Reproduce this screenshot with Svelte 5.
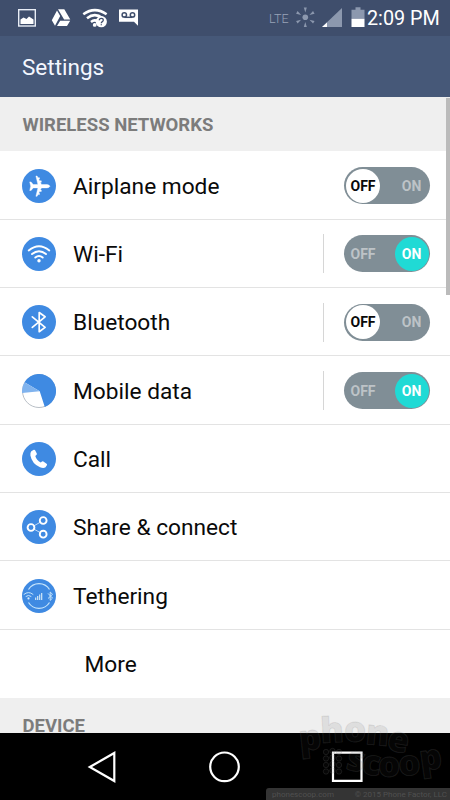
<script lang="ts">
  interface Row {
    icon: string;
    label: string;
    on?: boolean;
    split?: boolean; // thin rule between the label and its switch
  }

  let rows: Row[] = $state([
    { icon: "airplane", label: "Airplane mode", on: false },
    { icon: "wifi", label: "Wi-Fi", on: true, split: true },
    { icon: "bluetooth", label: "Bluetooth", on: false, split: true },
    { icon: "data", label: "Mobile data", on: true, split: true },
    { icon: "call", label: "Call" },
    { icon: "share", label: "Share & connect" },
    { icon: "tether", label: "Tethering" },
    { icon: "", label: "More" },
  ]);

  const RAYS = [0, 60, 120, 180, 240, 300];

  // Staggered dots in the watermark
  const DOTS: Array<[number, number]> = [];
  for (let r = 0; r < 4; r++) {
    for (let c = 0; c < 3; c++) DOTS.push([326 + c * 6.5, 752 + r * 6.5 - (c === 1 ? 1 : 0)]);
  }
</script>

<div class="phone">
  <header class="status">
    <svg class="notes" viewBox="0 0 150 36" aria-hidden="true">
      <rect x="18.7" y="9.7" width="16.6" height="16.3" fill="none" stroke="#e8edf6" stroke-width="1.4" />
      <path d="M20.500 24v-4.500l3-2 3 1.500 2.500-2.500 4.500 3v4.500z" fill="#fff" />
      <path d="M58 9.300h6.300l6 10.300h-6.200zM57 10.400l3.200 5.600-5.200 9.700-3.200-5.500zM60.200 20.700h10l-3.200 5.300h-10z" fill="#fff" />
      <g fill="none" stroke="#fff" stroke-width="2.500">
        <path d="M83.300 14.300q11.500-8.300 23.300 0" />
        <path d="M87 18.300q7.800-6.300 15.600 0" />
        <path d="M91 22q3.300-2.800 6.600-.8" />
      </g>
      <circle cx="94.700" cy="24.900" r="1.900" fill="#fff" />
      <circle cx="101.300" cy="21.700" r="5.600" fill="#fff" />
      <path d="M99.300 20.300q0-2 2-2t2 1.800q0 1.100-1.200 1.800-.8.500-.8 1.300m0 1.100v1" fill="none" stroke="#3f4e6c" stroke-width="1.300" />
      <path d="M119 9.500h19v16.200l-4-4h-15z" fill="#fff" />
      <g fill="none" stroke="#3f4e6c" stroke-width="1.500">
        <circle cx="124.300" cy="14.900" r="2.200" />
        <circle cx="132.500" cy="14.900" r="2.200" />
        <path d="M124.300 17.300h8.200" />
      </g>
    </svg>

    <span class="lte">LTE</span>
    <svg class="signals" viewBox="294 0 73 36" aria-hidden="true">
      <g fill="#8c98ae">
        <circle cx="305.300" cy="17.300" r="2.800" />
        {#each RAYS as a}
          <path d="M303.800 7.500h3l-1.500 5z" transform="rotate({a} 305.300 17.300)" />
        {/each}
        <path d="M342 8v19h-20z" />
        <path d="M355.500 7.300h5v2.500h4v9h-13v-9h4z" />
      </g>
      <path d="M322 27l5-4.600v4.600zM351.500 18.700h13v8.300h-13z" fill="#fff" />
    </svg>
    <span class="clock">2:09 PM</span>
  </header>

  <div class="title">Settings</div>

  <main>
    <h2>WIRELESS NETWORKS</h2>

    {#each rows as row}
      <div class="row" class:plain={!row.icon}>
        {#if row.icon}
          <svg class="icon" viewBox="0 0 34 34" aria-hidden="true">
            {#if row.icon !== "data"}<circle cx="17" cy="17" r="17" fill="#3f8ae2" />{/if}
            {#if row.icon === "airplane"}
              <path d="M28 17.200q-.8-1.600-3-1.700h-5.500l-1.200-2.200h1v-1.500h-1.800l-.8-1.700h.8v-1.400h-1.500l-.9-1.700h-1.200l2 8.500h-4.700l-2.100-2.600h-1.400l1 4.300-1 4.300h1.400l2.100-2.600h4.700l-2 8.400h1.200l.9-1.700h1.500v-1.400h-.8l.8-1.700h1.800v-1.500h-1l1.200-2.100h5.500q2.200-.1 3-1.700z" fill="#fff" stroke="#fff" stroke-width=".4" />
            {:else if row.icon === "wifi"}
              <g fill="none" stroke="#fff" stroke-width="1.900" stroke-linecap="round">
                <path d="M6.700 13.500q10.300-8.700 20.600 0" />
                <path d="M10 17.100q7-5.900 14 0" />
                <path d="M13.300 20.600q3.700-3 7.400 0" />
              </g>
              <circle cx="17" cy="23.800" r="1.700" fill="#fff" />
            {:else if row.icon === "bluetooth"}
              <path d="M10.300 11.800l12.800 10.600-5.900 4.300v-19.200l5.900 4.300-12.800 10.600" fill="none" stroke="#fff" stroke-width="1.700" stroke-linejoin="round" stroke-linecap="round" />
            {:else if row.icon === "data"}
              <circle cx="17" cy="17" r="16.500" fill="#fff" stroke="#b9bfc6" stroke-width="1" />
              <path d="M17.700 17.300L2.500 8.200A17 17 0 1 1 22.800 33z" fill="#3f8ae2" />
              <path d="M17.700 17.300L2.500 8.200A17 17 0 0 0 .1 19z" fill="#80b3ee" />
            {:else if row.icon === "call"}
              <path d="M9.300 9.300l2.500-1.500q.8-.3 1.300.5l1.700 3.300q.3.800-.4 1.400l-1.100 1q1.200 4.200 5.400 6.600l1.300-1q.7-.5 1.400 0l3.200 2.200q.8.600.3 1.400l-1.600 2.300q-2.200 1-5.300-.3Q9.900 21.500 8.400 13.400q-.3-2.700.9-4.100z" fill="#fff" />
            {:else if row.icon === "share"}
              <path d="M20.800 10.800l-11.800 6.700 11.800 6.500" fill="none" stroke="#c2dbf7" stroke-width="1" />
              <g fill="#3f8ae2" stroke="#fff" stroke-width="1.900">
                <circle cx="9" cy="17.500" r="3.400" />
                <circle cx="21.200" cy="10.500" r="3.400" />
                <circle cx="21.200" cy="24.200" r="3.400" />
              </g>
            {:else}
              <g fill="none" stroke="#c5e4fb" stroke-width="1.200">
                <path d="M6.500 10.500A12.400 12.400 0 0 1 27.500 10.500" />
                <path d="M6.500 23.500A12.400 12.400 0 0 0 27.500 23.500" />
                <path d="M1.700 15.600q4.800-4 9.600 0M3.700 17.600q2.800-2.300 5.600 0M26 14.400l4.500 4.700-2.300 2.300v-8.400l2.300 2.300-4.500 4.200" stroke-width="1" />
              </g>
              <circle cx="6.500" cy="19.400" r="1.100" fill="#d8ecfc" />
              <path d="M13 18.500h1.300v2.500h-1.300zM15 17h1.300v4h-1.300zM17 15.500h1.300v5.500h-1.300zM19 14h1.300v7h-1.300z" fill="#c5dff5" />
            {/if}
          </svg>
        {/if}
        <span class="label">{row.label}</span>
        {#if row.split}<span class="rule"></span>{/if}
        {#if row.on !== undefined}
          <button class="switch" class:on={row.on} aria-label={row.label} onclick={() => (row.on = !row.on)}>
            <span class="half off-half">OFF</span>
            <span class="half on-half">ON</span>
          </button>
        {/if}
      </div>
    {/each}

    <h2>DEVICE</h2>
    <span class="scrollbar"></span>
  </main>

  <nav>
    <svg viewBox="0 0 450 67" aria-hidden="true">
      <g fill="none" stroke="#fff" stroke-width="2.200">
        <path d="M89.800 34l24.500-14v28z" />
        <circle cx="224.500" cy="33.800" r="14.300" />
        <path d="M333 19.700h28.500v28.200h-28.500z" />
      </g>
    </svg>
  </nav>

  <svg class="watermark" viewBox="0 0 450 800" aria-hidden="true">
    <g class="brand">
      <text x="300 321 344 365 386" y="751 743 742 744 750" rotate="-6 -3 0 5 9">phone</text>
      <text x="345 361 378 399 421" y="769 774 777 776 771" rotate="12 6 0 -4 -8">scoop</text>
      {#each DOTS as [x, y]}
        <circle cx={x} cy={y} r="2.700" />
      {/each}
    </g>
  </svg>
  <div class="credit"><span>phonescoop.com</span><span>© 2015 Phone Factor, LLC</span></div>
</div>

<style>
  :global(body) { background: #000; }

  .phone {
    position: relative;
    display: flex;
    flex-direction: column;
    width: 450px;
    height: 800px;
    overflow: hidden;
    background: #fff;
    font-family: Roboto, "Liberation Sans", sans-serif;
  }

  .status {
    display: flex;
    align-items: center;
    height: 36px;
    background: #3f4e6c;
    color: #fff;
  }
  .notes { width: 150px; height: 36px; }
  .lte {
    width: 25px;
    margin-left: 119px;
    font-size: 12.500px;
    font-weight: 300;
    color: #98a3b7;
  }
  .signals { width: 73px; height: 36px; }
  .clock {
    padding-top: 1px;
    font-size: 19.800px;
    white-space: nowrap;
  }

  .title {
    box-sizing: border-box;
    height: 61px;
    padding-left: 22px;
    background: #465878;
    color: #f4f7ff;
    font-size: 22.500px;
    line-height: 62px;
  }

  main {
    position: relative;
    display: flex;
    flex-direction: column;
    height: 636px;
    overflow: hidden;
  }
  h2 {
    flex: none;
    box-sizing: border-box;
    height: 54.400px;
    margin: 0;
    padding-left: 22.500px;
    background: #efefef;
    color: #7c7c7c;
    font-size: 18.500px;
    font-weight: 700;
    line-height: 57px;
  }

  .row {
    flex: none;
    box-sizing: border-box;
    display: flex;
    align-items: center;
    height: 68.350px;
    padding: 1px 20px 0 22px;
    border-bottom: 1px solid #e3e3e3;
  }
  .plain {
    padding-left: 84.500px;
    border-bottom: 0;
  }
  .plain .label {
    margin-left: 0;
    padding-top: 0;
  }
  .icon {
    flex: none;
    width: 34px;
    height: 34px;
  }
  .label {
    flex: 1;
    margin-left: 17px;
    padding-top: 1.200px;
    color: #0a0a0a;
    font-size: 22.700px;
  }
  .rule {
    width: 1.500px;
    height: 39px;
    margin-right: 20px;
    background: #d6d6d6;
  }

  .switch {
    box-sizing: border-box;
    display: flex;
    justify-content: space-between;
    width: 86px;
    height: 37px;
    padding: 1.500px;
    border: 0;
    border-radius: 19px;
    background: #808e96;
    font: 700 14px Roboto, sans-serif;
    cursor: pointer;
  }
  .half {
    width: 34px;
    height: 34px;
    border-radius: 50%;
    color: #bdc3c7;
    line-height: 35px;
    text-align: center;
  }
  .off-half { margin-left: 0.500px; }
  .switch:not(.on) .off-half {
    background: #fff;
    color: #0a0a0a;
  }
  .on .on-half {
    background: #20dad5;
    color: #fff;
  }

  .scrollbar {
    position: absolute;
    top: 1px;
    right: 0;
    width: 4px;
    height: 197px;
    background: #bbb;
  }

  nav {
    height: 67px;
    background: #000;
  }
  nav svg {
    display: block;
    width: 450px;
    height: 67px;
  }

  .watermark {
    position: absolute;
    inset: 0;
    pointer-events: none;
  }
  .brand {
    fill: rgba(60, 60, 60, 0.1);
    stroke: rgba(130, 130, 130, 0.18);
    stroke-width: 1;
    font: 800 35px "Open Sans", sans-serif;
  }
  .credit {
    position: absolute;
    right: 0;
    bottom: 0;
    box-sizing: border-box;
    display: flex;
    justify-content: space-between;
    width: 184px;
    height: 12px;
    padding: 0 3px 0 6px;
    border-top-left-radius: 3px;
    background: #343434;
    color: #505050;
    font-size: 8px;
    line-height: 13px;
    white-space: nowrap;
  }
</style>
